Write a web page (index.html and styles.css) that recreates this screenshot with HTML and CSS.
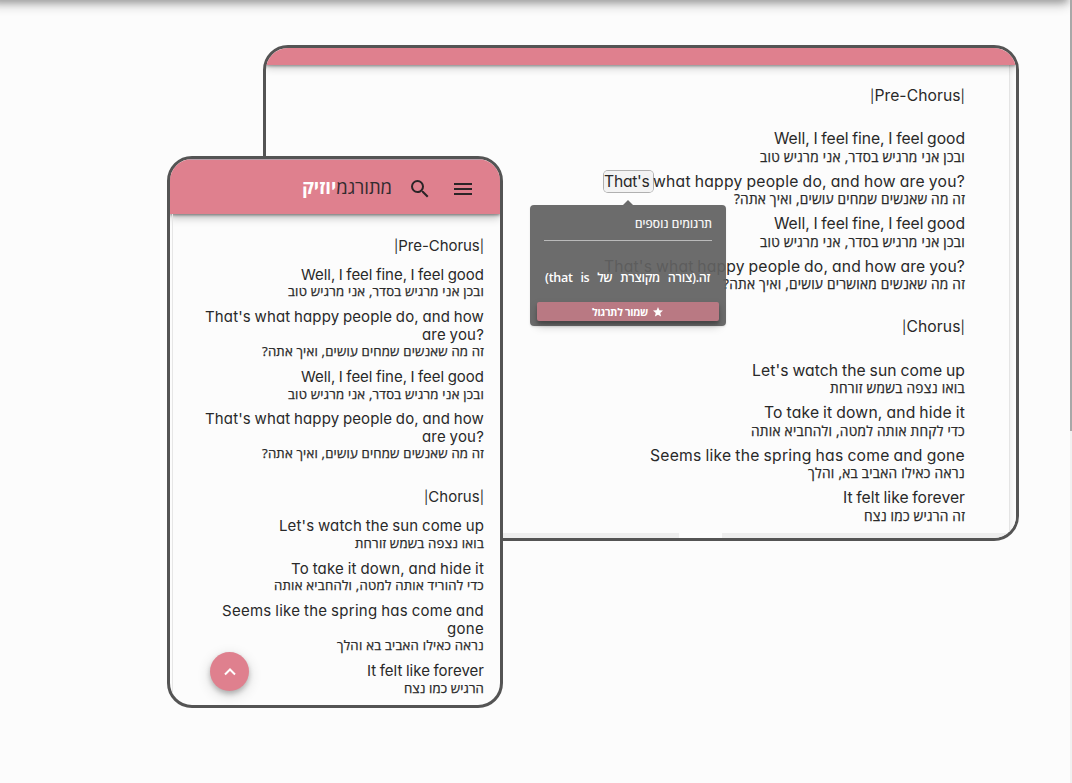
FILE: index.html
```html
<!DOCTYPE html>
<html lang="he">
<head>
<meta charset="utf-8">
<title>מתורגמיוזיק</title>
<link rel="stylesheet" href="styles.css">
</head>
<body>
<div class="top-shadow"></div>
<div class="scrollbar"></div>
<main class="showcase">
  <section class="device desktop">
    <div class="bar"></div>
    <div class="lyrics">
      <div class="title"><span data-w="95"><i>|</i>Pre-Chorus<i>|</i></span></div>
      <div class="verse">
        <p class="en"><span data-w="191">Well, I feel fine, I feel good</span></p>
        <p class="he"><span data-w="205">ובכן אני מרגיש בסדר, אני מרגיש טוב</span></p>
      </div>
      <div class="verse">
        <p class="en"><mark data-w="49">That's </mark><span data-w="312">what happy people do, and how are you?</span></p>
        <p class="he"><span data-w="231">זה מה שאנשים שמחים עושים, ואיך אתה?</span></p>
      </div>
      <div class="verse">
        <p class="en"><span data-w="191">Well, I feel fine, I feel good</span></p>
        <p class="he"><span data-w="205">ובכן אני מרגיש בסדר, אני מרגיש טוב</span></p>
      </div>
      <div class="verse">
        <p class="en"><span data-w="361">That's what happy people do, and how are you?</span></p>
        <p class="he"><span data-w="242">זה מה שאנשים מאושרים עושים, ואיך אתה?</span></p>
      </div>
      <div class="title second"><span data-w="63"><i>|</i>Chorus<i>|</i></span></div>
      <div class="verse">
        <p class="en"><span data-w="213">Let's watch the sun come up</span></p>
        <p class="he"><span data-w="135">בואו נצפה בשמש זורחת</span></p>
      </div>
      <div class="verse">
        <p class="en"><span data-w="201">To take it down, and hide it</span></p>
        <p class="he"><span data-w="214">כדי לקחת אותה למטה, ולהחביא אותה</span></p>
      </div>
      <div class="verse">
        <p class="en"><span data-w="315">Seems like the spring has come and gone</span></p>
        <p class="he"><span data-w="157">נראה כאילו האביב בא, והלך</span></p>
      </div>
      <div class="verse">
        <p class="en"><span data-w="122">It felt like forever</span></p>
        <p class="he"><span data-w="101">זה הרגיש כמו נצח</span></p>
      </div>
    </div>
    <div class="edge"></div>
    <div class="strip"></div>
  </section>

  <aside class="popover">
    <h2><span data-w="77">תרגומים נוספים</span></h2>
    <p class="meaning">זה.(צורה מקוצרת של that is)</p>
    <div class="save">
      <svg width="12" height="12" viewBox="0 0 24 24"><path fill="#fff" d="M12 17.3 18.2 21l-1.7-7L22 9.200l-7.200-.6L12 2 9.200 8.600 2 9.200l5.500 4.800-1.700 7z"/></svg>
      <span data-w="56">שמור לתרגול</span>
    </div>
  </aside>

  <section class="device phone">
    <header class="appbar">
      <svg class="menu" width="24" height="24" viewBox="0 0 24 24"><path fill="#2b2427" d="M3 18h18v-2H3v2zm0-5h18v-2H3v2zm0-7v2h18V6H3z"/></svg>
      <svg class="search" width="24" height="24" viewBox="0 0 24 24"><path fill="#2b2427" d="M15.500 14h-.79l-.28-.27A6.470 6.470 0 0 0 16 9.500 6.500 6.500 0 1 0 9.500 16c1.610 0 3.090-.59 4.230-1.570l.27.28v.79l5 4.990L20.490 19l-4.990-5zm-6 0C7.010 14 5 11.990 5 9.500S7.010 5 9.500 5 14 7.010 14 9.500 11.990 14 9.500 14z"/></svg>
      <div class="logo"><span data-w="90">מתורגמ<b>יוזיק</b></span></div>
    </header>
    <div class="lyrics">
      <div class="title"><span data-w="90"><i>|</i>Pre-Chorus<i>|</i></span></div>
      <div class="verse">
        <p class="en"><span data-w="183">Well, I feel fine, I feel good</span></p>
        <p class="he"><span data-w="196">ובכן אני מרגיש בסדר, אני מרגיש טוב</span></p>
      </div>
      <div class="verse">
        <p class="en"><span data-w="279">That's what happy people do, and how</span></p>
        <p class="en"><span data-w="62">are you?</span></p>
        <p class="he"><span data-w="222">זה מה שאנשים שמחים עושים, ואיך אתה?</span></p>
      </div>
      <div class="verse">
        <p class="en"><span data-w="183">Well, I feel fine, I feel good</span></p>
        <p class="he"><span data-w="196">ובכן אני מרגיש בסדר, אני מרגיש טוב</span></p>
      </div>
      <div class="verse">
        <p class="en"><span data-w="279">That's what happy people do, and how</span></p>
        <p class="en"><span data-w="62">are you?</span></p>
        <p class="he"><span data-w="222">זה מה שאנשים שמחים עושים, ואיך אתה?</span></p>
      </div>
      <div class="title second"><span data-w="60"><i>|</i>Chorus<i>|</i></span></div>
      <div class="verse">
        <p class="en"><span data-w="205">Let's watch the sun come up</span></p>
        <p class="he"><span data-w="129">בואו נצפה בשמש זורחת</span></p>
      </div>
      <div class="verse">
        <p class="en"><span data-w="193">To take it down, and hide it</span></p>
        <p class="he"><span data-w="210">כדי להוריד אותה למטה, ולהחביא אותה</span></p>
      </div>
      <div class="verse">
        <p class="en"><span data-w="262">Seems like the spring has come and</span></p>
        <p class="en"><span data-w="37">gone</span></p>
        <p class="he"><span data-w="147">נראה כאילו האביב בא והלך</span></p>
      </div>
      <div class="verse">
        <p class="en"><span data-w="117">It felt like forever</span></p>
        <p class="he"><span data-w="80">הרגיש כמו נצח</span></p>
      </div>
    </div>
    <div class="to-top">
      <svg width="16" height="16" viewBox="0 0 16 16"><path d="M3 10.500 8 5.500l5 5" fill="none" stroke="#fff" stroke-width="2"/></svg>
    </div>
  </section>
</main>
<script src="fit.js"></script>
</body>
</html>
```

FILE: fit.js
```js
// Tracks every line of text so that it fills its set measure.
document.querySelectorAll('[data-w]').forEach(function (el) {
  var natural = el.getBoundingClientRect().width;
  var gap = (Number(el.dataset.w) - natural) / el.textContent.length;
  el.style.letterSpacing = gap.toFixed(3) + 'px';
});
```

FILE: styles.css
```css
* { box-sizing: border-box; }
html, body { height: 100%; overflow: hidden; }
body {
  margin: 0;
  background: #fcfcfc;
  color: #292929;
  font-family: "Open Sans", "Liberation Sans", sans-serif;
}
p, h2 { margin: 0; font-weight: 400; }

.top-shadow {
  position: absolute;
  top: -10px;
  left: -10px;
  width: 1078px;
  height: 10px;
  box-shadow: 0 2px 6px rgba(0, 0, 0, .22), 0 4px 12px rgba(0, 0, 0, .3);
}
.scrollbar {
  position: absolute;
  top: 0;
  right: 0;
  width: 2px;
  height: 100%;
  background: linear-gradient(#a8a8a8 431px, #f1f1f1 431px);
}

.showcase { position: relative; width: 1072px; height: 783px; }
.device {
  position: absolute;
  border: 3px solid #545454;
  border-radius: 25px;
  background: #fcfcfc;
  overflow: hidden;
}
.desktop { left: 263px; top: 45px; width: 756px; height: 496px; }
.phone { left: 167px; top: 156px; width: 336px; height: 552px; }

.bar {
  height: 17px;
  background: #df808e;
  position: relative;
  z-index: 1;
  box-shadow: 0 1px 3px rgba(0, 0, 0, .4), 0 3px 8px rgba(0, 0, 0, .2);
}
.edge {
  position: absolute;
  top: 17px;
  right: 0;
  bottom: 0;
  width: 7px;
  border-left: 1px solid #e4e4e4;
  background: linear-gradient(90deg, #f1f1f1, #fcfcfc 5px);
}
.strip {
  position: absolute;
  left: 0;
  right: 7px;
  bottom: 0;
  height: 5px;
  background: linear-gradient(90deg, #eee 413px, #fcfcfc 413px, #fcfcfc 456px, #eee 456px);
}

.lyrics { display: flex; flex-direction: column; white-space: nowrap; }
.desktop .lyrics { padding: 21.800px 51px 0 0; font-size: 15.700px; }
.phone .lyrics { padding: 22.800px 16px 0 0; font-size: 15px; }
.title, .en {
  direction: ltr;
  text-align: right;
  font-family: Inter, "Open Sans", sans-serif;
  font-feature-settings: "cv11";
  word-spacing: -.7px;
  height: 17.500px;
  line-height: 17.500px;
}
.en { white-space: pre; }
.title i {
  font-size: 13px;
  font-style: normal;
}
.he {
  display: flex;
  direction: rtl;
  font-weight: 500;
  -webkit-text-stroke: .25px #292929;
  height: 18px;
  line-height: 17.600px;
}
.verse { margin-bottom: 7px; }
.phone .verse { margin-bottom: 6.900px; }
.desktop .title { margin-bottom: 26px; }
.desktop .second { margin-top: 18px; }
.phone .title { margin-bottom: 11.500px; }
.phone .second { margin-top: 18px; }
.desktop .he { font-size: 13.700px; }
.phone .he { font-size: 13.200px; }

mark {
  color: inherit;
  background: #f3f3f3;
  border-radius: 4px;
  padding: 1px 0;
  box-shadow: 0 0 0 1px #b0b0b0;
}

.popover {
  position: absolute;
  left: 530px;
  top: 205px;
  width: 196px;
  height: 121px;
  padding: 0 7px;
  border-radius: 4px;
  background: rgba(97, 97, 97, .93);
  color: #fff;
  direction: rtl;
  box-shadow: 0 1px 2px rgba(0, 0, 0, .1);
}
.popover::before {
  content: "";
  position: absolute;
  left: 93px;
  top: -5px;
  border: 5px solid transparent;
  border-top: 0;
  border-bottom-color: #6a6a6a;
}
.popover h2 {
  margin: 0 7px;
  height: 36px;
  border-bottom: 1.500px solid #bababa;
  font-size: 12px;
  font-weight: 500;
  -webkit-text-stroke: .2px #fff;
  line-height: 37px;
}
.meaning {
  margin: 27px 9px 15px 8px;
  height: 19px;
  font-size: 12.500px;
  font-weight: 600;
  line-height: 19px;
  letter-spacing: -.3px;
  text-align: justify;
  text-align-last: justify;
}
.save {
  display: flex;
  align-items: center;
  justify-content: center;
  gap: 4px;
  height: 19px;
  border-radius: 2px;
  background: #b97983;
  font-size: 10.500px;
  font-weight: 700;
  box-shadow: 0 3px 3px rgba(0, 0, 0, .2), 0 5px 10px rgba(0, 0, 0, .22);
}

.appbar {
  position: relative;
  display: flex;
  direction: rtl;
  align-items: center;
  height: 55px;
  padding-right: 25px;
  border-top: 1px solid #b9a0ab;
  background: #df808e;
  box-shadow: 0 1px 3px rgba(0, 0, 0, .45), 0 3px 9px rgba(0, 0, 0, .28);
}
.appbar .menu { margin-top: 3px; }
.appbar .search { margin: 4px 19px 0 16px; }
.logo { font-size: 18.500px; line-height: 28px; color: #322b2e; }
.logo b { color: #fff; }
.phone::after {
  content: "";
  position: absolute;
  left: 2px;
  top: 55px;
  bottom: 0;
  width: 1px;
  background: #e6e6e6;
}
.to-top {
  position: absolute;
  left: 40px;
  top: 493px;
  display: grid;
  place-items: center;
  width: 39px;
  height: 39px;
  border-radius: 50%;
  background: #df808e;
  box-shadow: 0 3px 5px rgba(0, 0, 0, .22), 0 4px 14px rgba(0, 0, 0, .16);
}
```
